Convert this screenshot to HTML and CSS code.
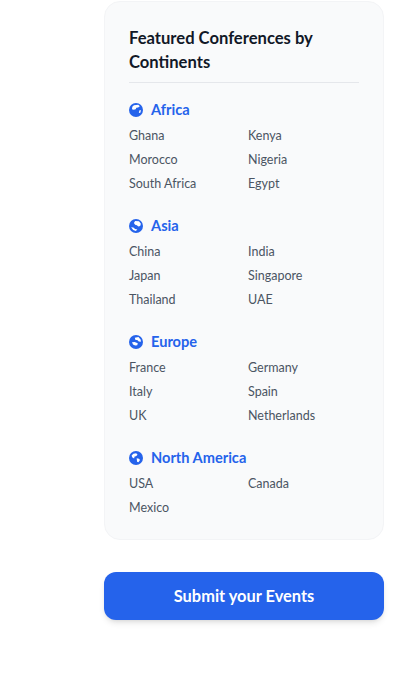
FILE: index.html
```html
<!DOCTYPE html>
<html lang="en">
<head>
    <meta charset="UTF-8">
    <meta name="viewport" content="width=device-width, initial-scale=1.0">
    <title>Featured Conferences</title>
    <link rel="stylesheet" href="styles.css">
</head>
<body>
    <svg class="defs" width="0" height="0" aria-hidden="true">
        <symbol id="globe-africa" viewBox="0 0 16 16">
            <circle cx="8" cy="8" r="8" fill="#2563eb"/>
            <path d="M5.6 2.6 10.6 2 12.4 3.8 10.4 5.2 8.4 5.4 7.6 7.2 5.4 7.8 3.4 7 3.8 4.4Z" fill="#fff"/>
            <path d="M12 8.2 13.8 8.4 12.8 11.4 11.2 11Z" fill="#fff"/>
        </symbol>
        <symbol id="globe-asia" viewBox="0 0 16 16">
            <circle cx="8" cy="8" r="8" fill="#2563eb"/>
            <path d="M7 2.4 11.4 2.6 13.6 5.4 12.8 8 10.6 8.6 9 7 7 6.6 5.6 4.6Z" fill="#fff"/>
            <path d="M2.4 9.4 5 9.6 7 11.4 9.6 12 7.8 13.6 4.8 12.6Z" fill="#fff"/>
        </symbol>
        <symbol id="globe-europe" viewBox="0 0 16 16">
            <circle cx="8" cy="8" r="8" fill="#2563eb"/>
            <path d="M6.6 3 10.8 2.4 13.4 5.4 13.6 7.8 11.2 7.4 9.4 5.8 7.4 5.8Z" fill="#fff"/>
            <path d="M3.4 8.4 6.4 8 10 9.4 9.4 11.8 7 12 4.6 10.8Z" fill="#fff"/>
        </symbol>
        <symbol id="globe-america" viewBox="0 0 16 16">
            <circle cx="8" cy="8" r="8" fill="#2563eb"/>
            <path d="M5 3.2 8.2 2.6 9.8 4.2 8 6 6.4 6.4 5.8 8.6 3.6 7.2 3 5.2Z" fill="#fff"/>
            <path d="M8.8 8.4 11.4 8.8 12.6 10.2 10.8 12.8 9.2 12.2Z" fill="#fff"/>
        </symbol>
    </svg>

    <main class="sidebar">
        <section class="card">
            <h2 class="card-title">Featured Conferences by Continents</h2>

            <div class="continent">
                <h3 class="continent-name"><svg class="globe"><use href="#globe-africa"/></svg>Africa</h3>
                <ul class="countries">
                    <li>Ghana</li>
                    <li>Kenya</li>
                    <li>Morocco</li>
                    <li>Nigeria</li>
                    <li>South Africa</li>
                    <li>Egypt</li>
                </ul>
            </div>

            <div class="continent">
                <h3 class="continent-name"><svg class="globe"><use href="#globe-asia"/></svg>Asia</h3>
                <ul class="countries">
                    <li>China</li>
                    <li>India</li>
                    <li>Japan</li>
                    <li>Singapore</li>
                    <li>Thailand</li>
                    <li>UAE</li>
                </ul>
            </div>

            <div class="continent">
                <h3 class="continent-name"><svg class="globe"><use href="#globe-europe"/></svg>Europe</h3>
                <ul class="countries">
                    <li>France</li>
                    <li>Germany</li>
                    <li>Italy</li>
                    <li>Spain</li>
                    <li>UK</li>
                    <li>Netherlands</li>
                </ul>
            </div>

            <div class="continent">
                <h3 class="continent-name"><svg class="globe"><use href="#globe-america"/></svg>North America</h3>
                <ul class="countries">
                    <li>USA</li>
                    <li>Canada</li>
                    <li>Mexico</li>
                </ul>
            </div>
        </section>

        <button class="submit-btn" type="button">Submit your Events</button>
    </main>
</body>
</html>
```

FILE: styles.css
```css
body {
    margin: 0;
    padding: 0;
    background: white;
    font-family: Lato, "Open Sans", sans-serif;
    color: #4b5563;
}

.defs {
    position: absolute;
}

.sidebar {
    margin: 0 28px 0 104px;
    padding-top: 1px;
    padding-bottom: 53px;
}

.card {
    padding: 24px 24px 19px;
    background: #f9fafb;
    border: 1px solid #f3f4f6;
    border-radius: 16px;
}

.card-title {
    margin: 0 0 15px;
    padding-bottom: 8px;
    border-bottom: 1px solid #e5e7eb;
    font-size: 16.6px;
    font-weight: 700;
    line-height: 24px;
    color: #111827;
}

.continent {
    margin-bottom: 18px;
}

.continent:last-child {
    margin-bottom: 0;
}

.continent-name {
    display: flex;
    align-items: center;
    gap: 8px;
    margin: 0 0 2px;
    font-size: 14.6px;
    font-weight: 700;
    line-height: 24px;
    color: #2563eb;
}

.globe {
    width: 14px;
    height: 14px;
}

.countries {
    display: grid;
    grid-template-columns: 1fr 1fr;
    column-gap: 8px;
    margin: 0;
    padding: 0;
    list-style: none;
    font-size: 12.5px;
    line-height: 24px;
}

.submit-btn {
    display: block;
    width: 100%;
    height: 48px;
    margin-top: 32px;
    padding: 0 0 2px;
    background: #2563eb;
    border: none;
    border-radius: 12px;
    box-shadow: 0 4px 6px -1px rgba(0, 0, 0, 0.1), 0 2px 4px -2px rgba(0, 0, 0, 0.1);
    color: white;
    font-family: inherit;
    font-size: 16.4px;
    font-weight: 700;
    cursor: pointer;
}
```
